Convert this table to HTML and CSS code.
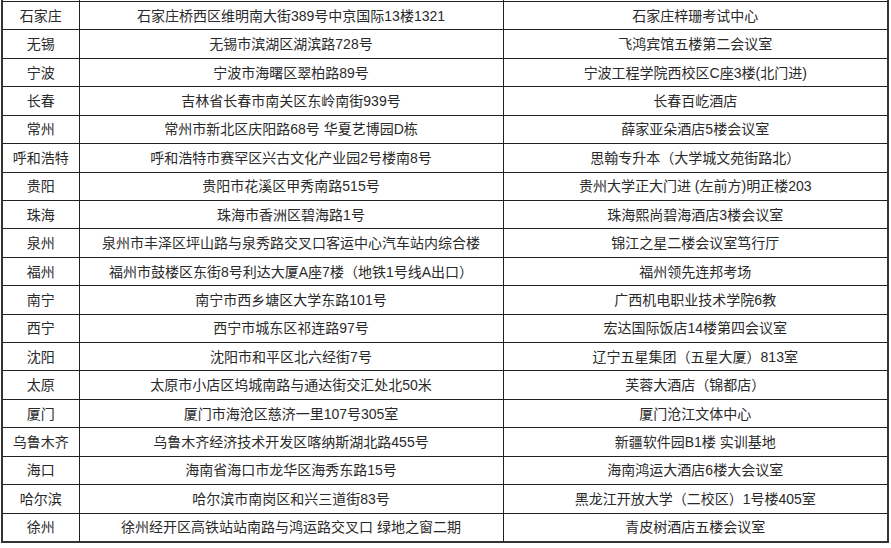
FILE: index.html
```html
<!DOCTYPE html>
<html lang="zh-CN">
<head>
<meta charset="utf-8">
<title>考点</title>
<link rel="stylesheet" href="styles.css">
</head>
<body>
<table class="sites">
<colgroup><col class="c1"><col class="c2"><col class="c3"></colgroup>
<tbody>
<tr class="cut"><td></td><td></td><td></td></tr>
<tr><td>石家庄</td><td>石家庄桥西区维明南大街389号中京国际13楼1321</td><td>石家庄梓珊考试中心</td></tr>
<tr><td>无锡</td><td>无锡市滨湖区湖滨路728号</td><td>飞鸿宾馆五楼第二会议室</td></tr>
<tr><td>宁波</td><td>宁波市海曙区翠柏路89号</td><td>宁波工程学院西校区C座3楼(北门进)</td></tr>
<tr><td>长春</td><td>吉林省长春市南关区东岭南街939号</td><td>长春百屹酒店</td></tr>
<tr><td>常州</td><td>常州市新北区庆阳路68号 华夏艺博园D栋</td><td>薛家亚朵酒店5楼会议室</td></tr>
<tr><td>呼和浩特</td><td>呼和浩特市赛罕区兴古文化产业园2号楼南8号</td><td>思翰专升本（大学城文苑街路北）</td></tr>
<tr><td>贵阳</td><td>贵阳市花溪区甲秀南路515号</td><td>贵州大学正大门进 (左前方)明正楼203</td></tr>
<tr><td>珠海</td><td>珠海市香洲区碧海路1号</td><td>珠海熙尚碧海酒店3楼会议室</td></tr>
<tr><td>泉州</td><td>泉州市丰泽区坪山路与泉秀路交叉口客运中心汽车站内综合楼</td><td>锦江之星二楼会议室笃行厅</td></tr>
<tr><td>福州</td><td>福州市鼓楼区东街8号利达大厦A座7楼（地铁1号线A出口）</td><td>福州领先连邦考场</td></tr>
<tr><td>南宁</td><td>南宁市西乡塘区大学东路101号</td><td>广西机电职业技术学院6教</td></tr>
<tr><td>西宁</td><td>西宁市城东区祁连路97号</td><td>宏达国际饭店14楼第四会议室</td></tr>
<tr><td>沈阳</td><td>沈阳市和平区北六经街7号</td><td>辽宁五星集团（五星大厦）813室</td></tr>
<tr><td>太原</td><td>太原市小店区坞城南路与通达街交汇处北50米</td><td>芙蓉大酒店（锦都店）</td></tr>
<tr><td>厦门</td><td>厦门市海沧区慈济一里107号305室</td><td>厦门沧江文体中心</td></tr>
<tr><td>乌鲁木齐</td><td>乌鲁木齐经济技术开发区喀纳斯湖北路455号</td><td>新疆软件园B1楼 实训基地</td></tr>
<tr><td>海口</td><td>海南省海口市龙华区海秀东路15号</td><td>海南鸿运大酒店6楼大会议室</td></tr>
<tr><td>哈尔滨</td><td>哈尔滨市南岗区和兴三道街83号</td><td>黑龙江开放大学（二校区）1号楼405室</td></tr>
<tr><td>徐州</td><td>徐州经开区高铁站站南路与鸿运路交叉口 绿地之窗二期</td><td>青皮树酒店五楼会议室</td></tr>
</tbody>
</table>
</body>
</html>
```

FILE: styles.css
```css
html, body {
  margin: 0;
  padding: 0;
  background: #fff;
}

.sites {
  border-collapse: collapse;
  table-layout: fixed;
  width: 886px;
  margin-left: 1px;
  font-family: "Liberation Sans", "Noto Sans CJK SC", sans-serif;
  font-size: 14px;
  color: #2a2a2a;
  border-left: 2px solid #333;
  border-right: 2px solid #333;
  border-bottom: 2px solid #333;
}

.c1 { width: 77px; }
.c2 { width: 424px; }
.c3 { width: 385px; }

.sites td {
  border: 1px solid #222;
  text-align: center;
  padding: 0;
  height: 27.43px;
  line-height: 16px;
  white-space: nowrap;
}

.sites .cut td {
  height: 1px;
  line-height: 0;
  font-size: 0;
  border-top: none;
}
```
